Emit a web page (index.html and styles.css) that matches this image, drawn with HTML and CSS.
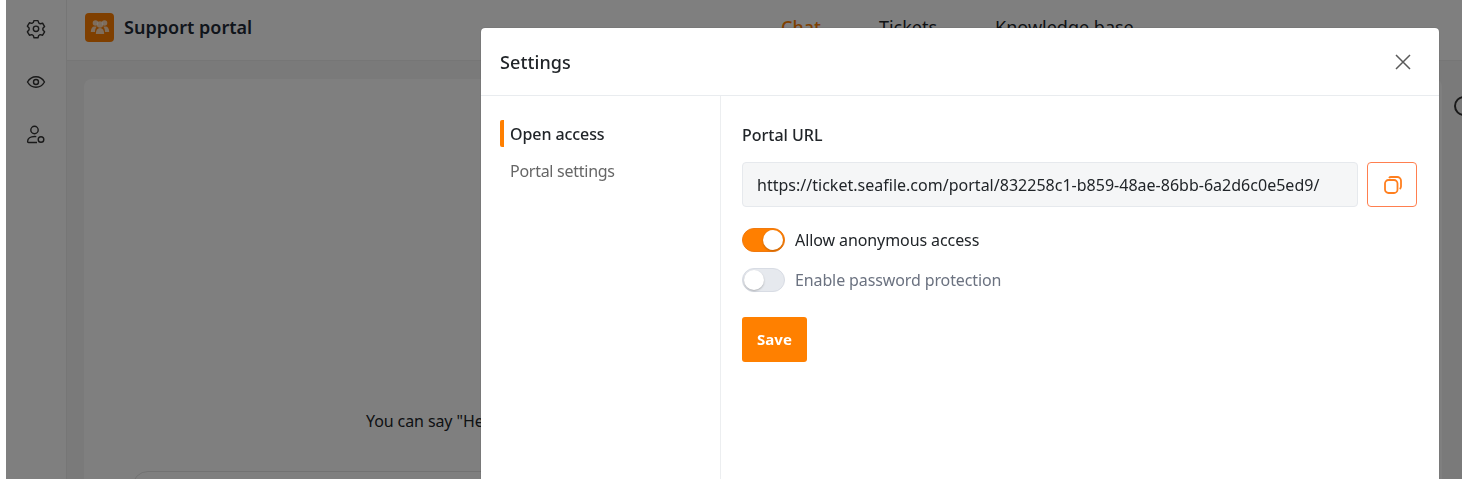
FILE: index.html
```html
<!DOCTYPE html>
<html lang="en">
<head>
<meta charset="utf-8">
<title>Support portal</title>
<link rel="stylesheet" href="styles.css">
</head>
<body>
<div class="app">
  <aside class="rail">
    <svg class="rail-icon" width="20" height="20" viewBox="0 0 20 20" fill="none" stroke="#333" stroke-width="1.400" stroke-linejoin="round"><path d="M8 1.8h4l.7 2.3 1.5.9 2.4-.6 2 3.400-1.700 1.700v1.800l1.700 1.700-2 3.400-2.400-.6-1.500.9-.7 2.300H8l-.7-2.300-1.500-.9-2.400.6-2-3.400L3.100 10.900V9.100L1.400 7.400l2-3.400 2.400.6 1.500-.9z" transform="translate(0 -.2)"/><circle cx="10" cy="9.800" r="2.700"/></svg>
    <svg class="rail-icon" width="20" height="20" viewBox="0 0 20 20" fill="none" stroke="#333" stroke-width="1.400"><path d="M1.500 10C3.500 6.600 6.400 4.800 10 4.800s6.500 1.800 8.500 5.200c-2 3.400-4.900 5.200-8.500 5.200S3.500 13.400 1.500 10z"/><circle cx="10" cy="10" r="2.500"/></svg>
    <svg class="rail-icon" width="20" height="20" viewBox="0 0 20 20" fill="none" stroke="#333" stroke-width="1.400"><circle cx="8.500" cy="5" r="3.700"/><path d="M11 17.500H2.500c-.6 0-.9-.4-.9-1 0-3 2.900-5 6.900-5 .6 0 1.200 0 1.800.1"/><circle cx="15" cy="14.500" r="2.800"/></svg>
  </aside>
  <div class="main">
    <header class="topbar">
      <div class="brand">
        <span class="logo">
          <svg width="20" height="18" viewBox="0 0 20 18" fill="#fff" fill-opacity=".72"><circle cx="5.500" cy="5" r="2.800"/><circle cx="14.500" cy="5" r="2.800"/><path d="M.8 14c0-3.500 1.500-5.500 3.500-5.500h2.500C5.500 10 5 12 5 14z"/><path d="M19.200 14c0-3.500-1.500-5.500-3.500-5.500h-2.500C14.500 10 15 12 15 14z"/><circle cx="10" cy="6.500" r="3.200"/><path d="M5.800 16c0-4 1.700-6 4.200-6s4.200 2 4.200 6z"/></svg>
        </span>
        <span class="brand-name">Support portal</span>
      </div>
      <nav class="tabs">
        <span class="tab tab-active">Chat</span>
        <span class="tab">Tickets</span>
        <span class="tab">Knowledge base</span>
      </nav>
    </header>
    <div class="stage">
      <section class="panel">
        <p class="hint">You can say "Hello" to start a conversation</p>
        <div class="composer"></div>
      </section>
      <div class="side-icon"></div>
    </div>
  </div>
</div>
<div class="backdrop"></div>
<div class="modal">
  <div class="modal-head">
    <h2 class="modal-title">Settings</h2>
    <svg class="close" width="18" height="18" viewBox="0 0 18 18" stroke="#5a5a5a" stroke-width="1.500" fill="none"><path d="M2 2l14 14M16 2L2 16"/></svg>
  </div>
  <div class="modal-body">
    <nav class="modal-nav">
      <a class="nav-item nav-active">Open access</a>
      <a class="nav-item">Portal settings</a>
    </nav>
    <div class="modal-main">
      <div class="field-label">Portal URL</div>
      <div class="url-row">
        <div class="url-box">https://ticket.seafile.com/portal/832258c1-b859-48ae-86bb-6a2d6c0e5ed9/</div>
        <button class="copy-btn">
          <svg width="18" height="18" viewBox="0 0 18 18" fill="none" stroke="#ff7f1f" stroke-width="1.800"><rect x="1" y="4" width="12.500" height="13" rx="3.500"/><path d="M5 2c.5-.7 1.200-1 2-1h6.200C15.300 1 17 2.700 17 4.800v5.700c0 1-.5 1.900-1.300 2.500"/></svg>
        </button>
      </div>
      <div class="toggle-row">
        <span class="switch switch-on"><span class="knob"></span></span>
        <span class="toggle-text">Allow anonymous access</span>
      </div>
      <div class="toggle-row toggle-row-off">
        <span class="switch"><span class="knob"></span></span>
        <span class="toggle-text toggle-muted">Enable password protection</span>
      </div>
      <button class="save">Save</button>
    </div>
  </div>
</div>
</body>
</html>
```
FILE: styles.css
```css
* { box-sizing: border-box; }
html, body { margin: 0; height: 100%; overflow: hidden; background: #fff; }
body { font-family: "Noto Sans", "Open Sans", sans-serif; color: #212529; font-size: 16px; }
.app { display: flex; height: 479px; overflow: hidden; margin-left: 6px; background: #fff; }
.rail { width: 61px; flex: none; display: flex; flex-direction: column; align-items: center; gap: 33px; padding: 19px 1px 0 0; border-right: 1px solid #ececec; }
.rail-icon { display: block; }
.main { flex: 1; display: flex; flex-direction: column; min-width: 0; }
.topbar { height: 61px; flex: none; display: flex; align-items: center; padding: 0 0 6px 18px; border-bottom: 1px solid #ececec; position: relative; }
.brand { display: flex; align-items: center; gap: 10px; width: 696px; }
.logo { width: 29px; height: 29px; border-radius: 4px; background: #ff7f00; display: flex; align-items: center; justify-content: center; }
.brand-name { font-size: 18px; font-weight: 600; color: #1f2a37; letter-spacing: .02px; }
.tabs { display: flex; gap: 58px; font-size: 18px; }
.tab { color: #212529; }
.tab-active { color: #ff7f00; font-weight: 500; }
.stage { flex: 1; display: flex; background: #f5f5f5; padding: 18px 0 0 17px; }
.panel { flex: none; width: 1358px; background: #fff; border-radius: 8px 8px 0 0; position: relative; display: flex; flex-direction: column; align-items: flex-start; }
.hint { margin: 331px 0 0 282px; font-size: 16px; color: #212529; white-space: nowrap; letter-spacing: -.1px; }
.composer { position: absolute; left: 48px; right: 48px; top: 392px; height: 60px; border: 1px solid #e4e4e4; border-radius: 16px; }
.side-icon { width: 20px; height: 20px; margin-top: 17px; border: 2px solid #333; border-radius: 50%; flex: none; margin-left: 12px; }
.backdrop { position: fixed; left: 6px; top: 0; right: 0; bottom: 0; background: rgba(0, 0, 0, .5); }
.modal { position: fixed; left: 481px; top: 28px; width: 958px; height: 451px; background: #fff; border-radius: 4px 4px 0 0; box-shadow: 0 0 1px rgba(0, 0, 0, .5); display: flex; flex-direction: column; }
.modal-head { height: 68px; flex: none; display: flex; align-items: center; justify-content: space-between; padding: 0 27px 0 19px; border-bottom: 1px solid #e9ecef; }
.modal-title { margin: 0; font-size: 18px; font-weight: 500; color: #212529; letter-spacing: .1px; }
.close { display: block; }
.modal-body { flex: 1; display: flex; }
.modal-nav { width: 240px; flex: none; border-right: 1px solid #eceef0; padding: 24px 0 0 19px; display: flex; flex-direction: column; gap: 9px; }
.nav-item { display: block; height: 28px; line-height: 28px; padding-left: 10px; color: #666; font-size: 16px; letter-spacing: -.27px; }
.nav-active { height: 27px; margin-bottom: 1px; color: #212529; font-weight: 500; border-left: 4px solid #ff7f00; border-radius: 2px; padding-left: 6px; letter-spacing: -.08px; }
.modal-main { flex: 1; padding: 27px 22px 0 21px; display: flex; flex-direction: column; align-items: flex-start; }
.field-label { font-size: 16px; font-weight: 500; color: #212529; line-height: 24px; }
.url-row { display: flex; gap: 9px; margin-top: 15px; width: 100%; }
.url-box { flex: 1; height: 45px; line-height: 45px; padding-left: 14px; border: 1px solid #e6e9ed; border-radius: 4px; background: #f5f6f7; color: #212529; font-size: 16px; letter-spacing: .012px; white-space: nowrap; }
.copy-btn { width: 50px; height: 45px; flex: none; padding: 0 0 0 1px; display: flex; align-items: center; justify-content: center; background: #fff; border: 1px solid #ff7f4f; border-radius: 4px; }
.toggle-row { display: flex; align-items: center; gap: 10px; margin-top: 21px; height: 24px; }
.toggle-row-off { margin-top: 16px; }
.toggle-text { font-size: 16px; color: #212529; letter-spacing: -.09px; }
.toggle-muted { color: #6b7280; letter-spacing: -.12px; }
.switch { width: 43px; height: 24px; border-radius: 12px; background: #e6e9ee; border: 1px solid #d8dce4; display: flex; align-items: center; justify-content: flex-start; padding: 0 1px; }
.switch-on { background: #ff7f00; border-color: #f07a10; justify-content: flex-end; }
.knob { width: 20px; height: 20px; border-radius: 50%; background: #fff; box-shadow: 0 1px 2px rgba(0, 0, 0, .25); }
.save { margin-top: 25px; width: 65px; height: 45px; background: #ff8000; color: #fff; font: 700 15px "Noto Sans", sans-serif; border: 0; border-radius: 3px; padding: 0 0 2px; }
```
